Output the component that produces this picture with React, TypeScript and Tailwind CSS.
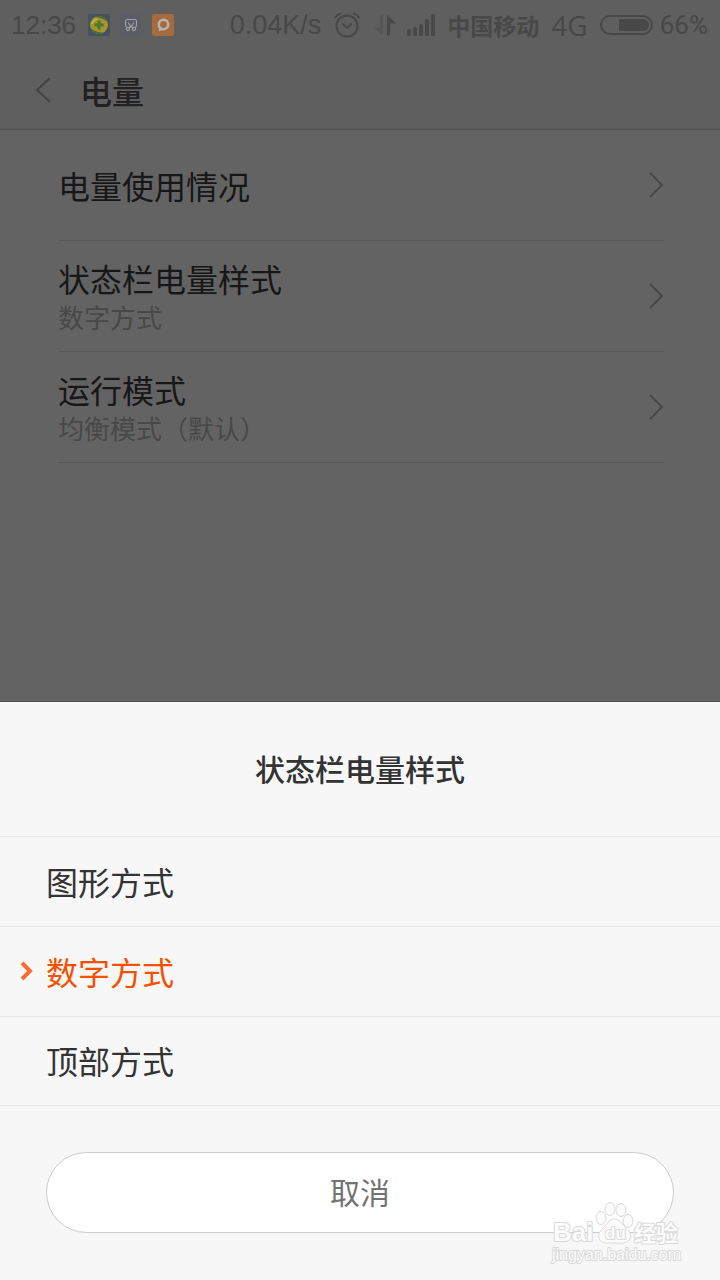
import { useState } from 'react';

const SETTINGS = [
  { title: '电量使用情况' },
  { title: '状态栏电量样式', value: '数字方式' },
  { title: '运行模式', value: '均衡模式（默认）' },
];

const OPTIONS = ['图形方式', '数字方式', '顶部方式'];

function StatusBar() {
  return (
    <div className="flex h-[50px] items-center pl-[11px] pr-3 font-['Liberation_Sans','Noto_Sans_CJK_SC',sans-serif] text-[26px] leading-[34px] text-[#484848]">
      <span>12:36</span>
      <div className="ml-3 flex gap-[10px]">
        {/* 360 */}
        <svg width="22" height="22" viewBox="0 0 22 22">
          <rect width="22" height="22" rx="2" fill="#46525c" />
          <circle cx="11" cy="11" r="9" fill="#a8932c" />
          <path d="M7 3A9 9 0 0 1 19.500 8.500C17 5 12 3.500 7 3z" fill="#3d6b35" />
          <path d="M2.500 14a9 9 0 0 0 13 4.500C10 18.500 6 17 2.500 14z" fill="#3d6b35" />
          <path d="M4 10Q5.500 6 9 5" fill="none" stroke="#bdb558" strokeWidth="1.500" />
          <path d="M9.500 6.500h3.200v3h3v3h-3v3H9.500v-3h-3v-3h3z" fill="#4d7a2b" />
        </svg>
        {/* screenshot scissors */}
        <svg width="22" height="22" viewBox="0 0 22 22" fill="none" stroke="#a3a3a8" strokeWidth="1.100">
          <rect width="22" height="22" rx="2" fill="#5b5d66" stroke="none" />
          <path d="M6.500 13Q5.500 12.500 5.500 11V7.500Q5.500 5.500 7.500 5.500h7Q16.500 5.500 16.500 7.500V11q0 1.500-1 2" />
          <path d="M8 8.500l2.500 3.500L13 14M14 8.500L11.500 12 9 14" />
          <circle cx="8" cy="15" r="1.600" />
          <circle cx="14" cy="15" r="1.600" />
        </svg>
        {/* chat bubble */}
        <svg width="22" height="22" viewBox="0 0 22 22">
          <rect width="22" height="22" rx="2" fill="#a56a3e" />
          <circle cx="11.500" cy="10.500" r="4.700" fill="none" stroke="#b9b3af" strokeWidth="2.600" />
          <path d="M7 13v4.500l4.500-2z" fill="#b9b3af" />
        </svg>
      </div>

      <span className="ml-auto text-[27px]">0.04K/s</span>
      <svg className="ml-3" width="28" height="28" viewBox="0 0 28 28" fill="none" stroke="currentColor" strokeWidth="2">
        <circle cx="14" cy="15" r="10.500" />
        <path d="M9.500 12.500l4.500 4.500 4.500-4.500" />
        <path d="M1.500 7Q4 3.500 8 2.500M26.500 7Q24 3.500 20 2.500" />
      </svg>
      <svg className="ml-3" width="24" height="24" viewBox="0 0 24 24">
        <path d="M7 2h3v20.500L1 14.500h6z" fill="#565656" />
        <path d="M14 22.500V1.500l9 9h-6v12z" fill="currentColor" />
      </svg>
      <svg className="ml-[10px]" width="28" height="24" viewBox="0 0 28 24" fill="currentColor">
        <rect x="0" y="16" width="4" height="7" rx="1.500" />
        <rect x="6" y="14" width="4" height="9" rx="1.500" />
        <rect x="12" y="11" width="4" height="12" rx="1.500" />
        <rect x="18" y="6" width="4" height="17" rx="1.500" />
        <rect x="24" y="1" width="4" height="22" rx="1.500" />
      </svg>
      <span className="ml-3 font-['Noto_Sans_CJK_SC',sans-serif] text-[23px] font-bold">中国移动</span>
      <span className="ml-3 font-['Open_Sans',sans-serif] text-[28px]">4G</span>
      <svg className="ml-3" width="53" height="20" viewBox="0 0 53 20">
        <rect x="1" y="1" width="51" height="18" rx="9" fill="none" stroke="currentColor" strokeWidth="2" />
        <path d="M19 4h24a6 6 0 0 1 0 12H19z" fill="currentColor" />
      </svg>
      <span className="ml-[7px] font-[Roboto,sans-serif]">66%</span>
    </div>
  );
}

function Watermark() {
  return (
    <svg
      className="pointer-events-none absolute bottom-3 right-9 font-['Liberation_Sans','Noto_Sans_CJK_SC',sans-serif]"
      width="134"
      height="68"
      viewBox="0 0 134 68"
      fill="#fbfbfb"
      stroke="#dadada"
      strokeWidth="1"
    >
      <ellipse cx="51" cy="18" rx="5" ry="6.500" />
      <ellipse cx="60" cy="9" rx="5" ry="6.500" />
      <ellipse cx="71" cy="10" rx="5" ry="6.500" />
      <ellipse cx="78" cy="21" rx="5" ry="6.500" />
      <path d="M64 19c6 0 8 5 12 9 5 4 6 8 3 12-3 4-9 3-15 3s-12 1-14-3c-3-4-1-8 3-12 4-4 6-9 11-9z" />
      <g paintOrder="stroke" strokeWidth="2" strokeLinejoin="round">
        <text x="3" y="41" fontSize="26" fontWeight="700">Bai</text>
        <text x="55" y="39" fontSize="17" fontWeight="700">du</text>
        <text x="84" y="41" fontSize="22" fontWeight="700">经验</text>
        <text x="2" y="60" fontSize="16">jingyan.baidu.com</text>
      </g>
    </svg>
  );
}

export default function App() {
  const [selected, setSelected] = useState('数字方式');

  return (
    <div className="flex min-h-screen flex-col bg-[#636363] font-['Noto_Sans_CJK_SC',sans-serif]">
      <header className="border-b border-[#4f4f4f] bg-[#5f5f5f]">
        <StatusBar />
        <div className="flex h-[79px] items-center pl-[35px]">
          <button aria-label="返回" className="text-[#434343]">
            <svg width="16" height="26" viewBox="0 0 16 26" fill="none" stroke="currentColor" strokeWidth="2">
              <path d="M15 1L2 13l13 12" />
            </svg>
          </button>
          <h1 className="ml-[29px] text-[32px] font-medium leading-10 text-[#222222]">电量</h1>
        </div>
      </header>

      <main className="flex-1 border-b border-[#4f4f4f] pl-[58px] pr-14">
        {SETTINGS.map(item => (
          <button
            key={item.title}
            className="flex h-[111px] w-full items-center justify-between border-b border-[#585858] text-left"
          >
            <span className="flex flex-col">
              <span className="text-[32px] leading-[42px] text-[#171717]">{item.title}</span>
              {item.value && <span className="text-[26px] leading-9 text-[#484848]">{item.value}</span>}
            </span>
            <svg width="16" height="26" viewBox="0 0 16 26" fill="none" stroke="#484848" strokeWidth="2">
              <path d="M2 1l12 12L2 25" />
            </svg>
          </button>
        ))}
      </main>

      <section role="dialog" aria-labelledby="sheet-title" className="relative bg-[#f7f7f7] text-[#333333]">
        <h2
          id="sheet-title"
          className="flex h-[135px] items-center justify-center border-b border-[#e5e5e5] pb-0.5 text-[30px] font-medium"
        >
          状态栏电量样式
        </h2>
        <div>
          {OPTIONS.map(option => (
            <label
              key={option}
              className="flex h-[90px] cursor-pointer items-center border-b border-[#e5e5e5] pb-0.5 pl-5 text-[32px] last:h-[89px] has-checked:text-[#f55000]"
            >
              <input
                type="radio"
                name="battery-style"
                className="peer sr-only"
                checked={selected === option}
                onChange={() => setSelected(option)}
              />
              <svg
                className="invisible mr-3 peer-checked:visible"
                width="14"
                height="20"
                viewBox="0 0 14 20"
                fill="none"
                stroke="#ff6a33"
                strokeWidth="4"
              >
                <path d="M2 2l8 8-8 8" />
              </svg>
              {option}
            </label>
          ))}
        </div>
        <div className="px-[46px] pb-[47px] pt-[46px]">
          <button className="h-[81px] w-full rounded-full border border-[#cccccc] bg-white pb-0.5 text-[30px] text-[#737373]">
            取消
          </button>
        </div>
        <Watermark />
      </section>
    </div>
  );
}
